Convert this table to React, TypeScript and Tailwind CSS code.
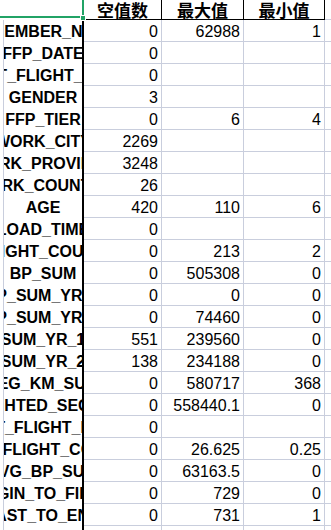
import React from "react";

type Row = [string, string, string, string];

const rows: Row[] = [
  ["MEMBER_NO", "0", "62988", "1"],
  ["FFP_DATE", "0", "", ""],
  ["FIRST_FLIGHT_DATE", "0", "", ""],
  ["GENDER", "3", "", ""],
  ["FFP_TIER", "0", "6", "4"],
  ["WORK_CITY", "2269", "", ""],
  ["WORK_PROVINCE", "3248", "", ""],
  ["WORK_COUNTRY", "26", "", ""],
  ["AGE", "420", "110", "6"],
  ["LOAD_TIME", "0", "", ""],
  ["FLIGHT_COUNT", "0", "213", "2"],
  ["BP_SUM", "0", "505308", "0"],
  ["EP_SUM_YR_1", "0", "0", "0"],
  ["EP_SUM_YR_2", "0", "74460", "0"],
  ["SUM_YR_1", "551", "239560", "0"],
  ["SUM_YR_2", "138", "234188", "0"],
  ["SEG_KM_SUM", "0", "580717", "368"],
  ["WEIGHTED_SEG_KM", "0", "558440.1", "0"],
  ["LAST_FLIGHT_DATE", "0", "", ""],
  ["AVG_FLIGHT_COUNT", "0", "26.625", "0.25"],
  ["AVG_BP_SUM", "0", "63163.5", "0"],
  ["BEGIN_TO_FIRST", "0", "729", "0"],
  ["LAST_TO_END", "0", "731", "1"],
  ["", "", "", ""],
];

const grid = "grid grid-cols-[3px_81px_78px_82px_81px_1fr]";

function NumCell({ v }: { v: string }) {
  return (
    <div className="h-[22px] border-b border-r border-[#c9cedd] flex items-center justify-end pr-[3px] pt-[2px] text-[16px] leading-[20px] text-black overflow-hidden whitespace-nowrap">
      {v}
    </div>
  );
}

function HeadCell({ t }: { t: string }) {
  return (
    <div
      className="h-[20px] border-b border-r border-black flex items-center justify-center font-bold text-[17px] leading-[20px] text-black"
      style={{ fontFamily: '"Noto Sans CJK SC", sans-serif' }}
    >
      {t}
    </div>
  );
}

export default function App() {
  return (
    <div
      className="w-[331px] h-[530px] overflow-hidden bg-white relative"
      style={{ fontFamily: '"Liberation Sans", Arial, "Noto Sans CJK SC", sans-serif' }}
    >
      {/* header */}
      <div className={grid + " h-[20px]"}>
        <div className="col-span-2 h-[18px] border-r-2 border-b-2 border-[#21a366] bg-white" />
        <HeadCell t="空值数" />
        <HeadCell t="最大值" />
        <HeadCell t="最小值" />
        <div className="h-[20px] border-b border-[#c9cedd] bg-white" />
      </div>
      {/* fill handle */}
      <div className="absolute left-[80px] top-[15px] w-[6px] h-[6px] bg-[#21a366] border border-white" />

      {rows.map((r, i) => (
        <div key={i} className={grid}>
          <div className="h-[22px] bg-white" />
          <div className="h-[22px] border-l border-l-[#c9cedd] border-r-2 border-r-black flex items-center justify-center overflow-hidden pt-[2px]">
            <span className="shrink-0 whitespace-nowrap font-bold text-[16px] leading-[20px] text-black">
              {r[0]}
            </span>
          </div>
          <NumCell v={r[1]} />
          <NumCell v={r[2]} />
          <NumCell v={r[3]} />
          <div className="h-[22px] border-b border-[#c9cedd]" />
        </div>
      ))}
    </div>
  );
}
